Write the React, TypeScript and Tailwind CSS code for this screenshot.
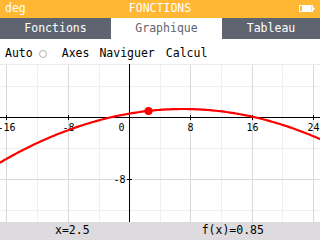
import React from "react";

const X0 = 129.33;
const SX = 7.667;
const Y0 = 117.5;
const SY = 7.75;
const f = (x: number) => (-0.85 / 70) * (x + 2.5) * (x - 16.5);

function Graph() {
  const minor = [37, 99, 160, 221, 282];
  const major = [6, 68, 190, 252, 313];
  const hMinor = [86, 148, 210];
  const hMajor = [179];
  const pts: string[] = [];
  for (let px = -2; px <= 322; px += 2) {
    const x = (px - X0) / SX;
    const py = Y0 - f(x) * SY;
    pts.push(`${px},${py.toFixed(2)}`);
  }
  const dotX = X0 + 2.5 * SX;
  const dotY = Y0 - 0.85 * SY;
  const xLabels: [string, number][] = [
    ["-16", 6.5],
    ["-8", 68.5],
    ["8", 190.5],
    ["16", 252.5],
    ["24", 313.5],
  ];
  return (
    <svg width={320} height={158} viewBox="0 64 320 158" className="block">
      <rect x={0} y={64} width={320} height={158} fill="#ffffff" />
      <line x1={0} x2={320} y1={64.5} y2={64.5} stroke="#ececec" strokeWidth={1} />
      {minor.map((c) => (
        <line key={"vm" + c} x1={c + 0.5} x2={c + 0.5} y1={65} y2={222} stroke="#efefef" strokeWidth={1} />
      ))}
      {hMinor.map((r) => (
        <line key={"hm" + r} x1={0} x2={320} y1={r + 0.5} y2={r + 0.5} stroke="#efefef" strokeWidth={1} />
      ))}
      {major.map((c) => (
        <line key={"vM" + c} x1={c + 0.5} x2={c + 0.5} y1={65} y2={222} stroke="#d9d9d9" strokeWidth={1} />
      ))}
      {hMajor.map((r) => (
        <line key={"hM" + r} x1={0} x2={320} y1={r + 0.5} y2={r + 0.5} stroke="#d9d9d9" strokeWidth={1} />
      ))}
      {/* axes */}
      <line x1={0} x2={320} y1={117.5} y2={117.5} stroke="#000" strokeWidth={1} />
      <line x1={129.5} x2={129.5} y1={64} y2={222} stroke="#000" strokeWidth={1} />
      {major.map((c) => (
        <line key={"t" + c} x1={c + 0.5} x2={c + 0.5} y1={115} y2={120} stroke="#000" strokeWidth={1} />
      ))}
      <line x1={127} x2={132} y1={179.5} y2={179.5} stroke="#000" strokeWidth={1} />
      {xLabels.map(([t, x]) => (
        <text key={t} x={x} y={131} textAnchor="middle" fontFamily="DejaVu Sans Mono, monospace" fontSize={10} fill="#000">
          {t}
        </text>
      ))}
      <text x={121.5} y={131} textAnchor="middle" fontFamily="DejaVu Sans Mono, monospace" fontSize={10} fill="#000">
        0
      </text>
      <text x={125.5} y={183} textAnchor="end" fontFamily="DejaVu Sans Mono, monospace" fontSize={10} fill="#000">
        -8
      </text>
      <polyline points={pts.join(" ")} fill="none" stroke="#ff0000" strokeWidth={2.2} strokeLinejoin="round" />
      <circle cx={dotX} cy={dotY} r={4} fill="#ff0000" />
    </svg>
  );
}

function Battery() {
  return (
    <svg width={18} height={10} viewBox="0 0 18 10" className="block">
      <rect x={1.5} y={1.5} width={13} height={6} fill="none" stroke="#fff" strokeWidth={1} />
      <rect x={4} y={2} width={9.5} height={5} fill="#fff" />
      <rect x={15} y={3.5} width={1.5} height={2.5} fill="#fff" />
    </svg>
  );
}

export default function App() {
  return (
    <div className="w-[320px] h-[240px] overflow-hidden bg-white font-['DejaVu_Sans_Mono',monospace] text-[11.5px] leading-none">
      {/* status bar */}
      <div className="h-[18px] bg-[#ffb734] text-white grid grid-cols-[1fr_auto_1fr] items-center">
        <div className="pl-[5px]">deg</div>
        <div>FONCTIONS</div>
        <div className="flex justify-end pr-[4px]">
          <Battery />
        </div>
      </div>
      {/* tabs */}
      <div className="h-[21px] bg-[#5e6570] flex text-white">
        <div className="w-[111px] flex items-center justify-center">Fonctions</div>
        <div className="w-[111px] flex items-center justify-center bg-white text-[#5e6570]">Graphique</div>
        <div className="flex-1 flex items-center justify-center">Tableau</div>
      </div>
      {/* toolbar */}
      <div className="h-[25px] flex items-center pt-[4px] pl-[5px] text-black">
        <span>Auto</span>
        <span className="ml-[6px] w-[8px] h-[8px] rounded-full border border-[#b0b0b0]" />
        <span className="ml-[15px]">Axes</span>
        <span className="ml-[10px]">Naviguer</span>
        <span className="ml-[11px]">Calcul</span>
      </div>
      <Graph />
      {/* bottom bar */}
      <div className="h-[18px] bg-[#dedbde] flex items-center text-black">
        <span className="ml-[55px]">x=2.5</span>
        <span className="ml-[112px]">f(x)=0.85</span>
      </div>
    </div>
  );
}
